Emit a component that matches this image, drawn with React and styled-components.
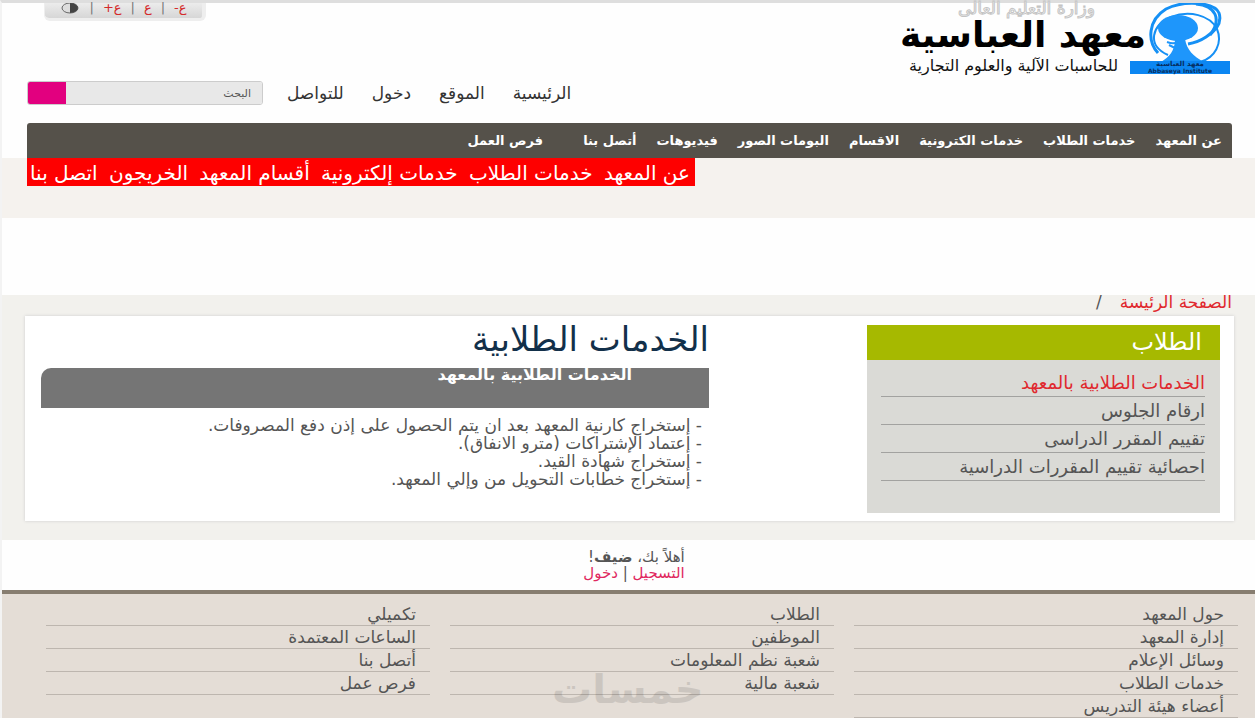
import React from 'react'
import styled, { createGlobalStyle } from 'styled-components'

const GlobalStyle = createGlobalStyle`
    * {
        box-sizing: border-box;
    }
    body {
        margin: 0;
        background: #fefefe;
        color: #555;
        font-family: "DejaVu Sans", "Noto Sans", sans-serif;
        font-size: 17px;
    }
    a {
        color: inherit;
        text-decoration: none;
        white-space: nowrap;
    }
    ul {
        margin: 0;
        padding: 0;
        list-style: none;
    }
`

const Page = styled.div`
    border-top: 3px solid #dedede;
    border-left: 2px solid #f3f3f3;
`

const Header = styled.header`
    padding: 0 23px 0 25px;
`

const TopRow = styled.div`
    display: flex;
    justify-content: space-between;
    align-items: flex-start;
    height: 78px;
`

const Brand = styled.div`
    display: flex;
    padding-right: 2px;
`

const BrandText = styled.div`
    display: flex;
    flex-direction: column;
    margin-right: -16px;
    white-space: nowrap;
`

const Ministry = styled.div`
    padding-right: 51px;
    font-size: 17px;
    line-height: 10px;
    color: #fff;
    -webkit-text-stroke: 1px #c4c4c4;
`

const Title = styled.h1`
    margin: 0;
    font-size: 36px;
    line-height: 44px;
    color: #000;
`

const Subtitle = styled.div`
    padding-right: 28px;
    font-size: 16px;
    line-height: 18px;
    color: #111;
`

const Tools = styled.div`
    display: flex;
    align-items: flex-start;
    justify-content: center;
    gap: 9px;
    width: 162px;
    height: 18px;
    margin-left: 17px;
    color: #777;
    background: linear-gradient(#ececec, #d6d6d6);
    border: solid #eee;
    border-width: 0 4px 3px 1px;
    border-radius: 0 0 6px 6px;
    font-size: 13px;
    line-height: 9px;
`

const ToolButton = styled.button`
    padding: 0;
    border: 0;
    background: none;
    font: inherit;
    line-height: 9px;
    color: #d42a2a;
`

const QuickRow = styled.div`
    display: flex;
    justify-content: flex-end;
    align-items: center;
    gap: 24px;
    height: 24px;
`

const QuickLinks = styled.nav`
    display: flex;
    gap: 28px;
    font-size: 17px;
    color: #333;
`

const Search = styled.form`
    display: flex;
    width: 236px;
    height: 24px;
    border: 1px solid #ccc;
    border-radius: 3px;
    overflow: hidden;
`

const SearchInput = styled.input`
    flex: 1;
    min-width: 0;
    padding: 0 11px;
    border: 0;
    background: #e8e8e8;
    font: inherit;
    font-size: 11px;
    &::placeholder {
        color: #555;
        opacity: 1;
    }
`

const SearchButton = styled.button`
    width: 38px;
    padding: 0;
    border: 0;
    background: #e2007f;
`

const MainNav = styled.nav`
    display: flex;
    align-items: center;
    gap: 20px;
    height: 35px;
    margin-top: 18px;
    padding-right: 10px;
    background: #55514a;
    border-radius: 3px 3px 0 0;
    font-size: 13px;
    font-weight: bold;
    color: #fff;
    a:last-child {
        margin-right: 20px;
    }
`

const SubBand = styled.div`
    display: flex;
    justify-content: flex-end;
    align-items: flex-start;
    height: 60px;
    padding-left: 25px;
    background: #f5f2ee;
`

const RedNav = styled.nav`
    display: flex;
    align-items: center;
    justify-content: space-between;
    width: 668px;
    height: 28px;
    padding: 2px 5px 0 3px;
    background: #fe0000;
    color: #fff;
    font-size: 20px;
    line-height: 24px;
`

const Content = styled.main`
    margin-top: 77px;
    padding: 0 21px 19px 23px;
    background: #f2f1ed;
`

const Crumbs = styled.nav`
    display: flex;
    gap: 18px;
    height: 21px;
    padding-right: 2px;
    line-height: 14px;
    a {
        color: #e0282e;
    }
`

const Card = styled.div`
    display: flex;
    justify-content: space-between;
    gap: 40px;
    padding: 9px 14px 8px 16px;
    background: #fff;
    box-shadow: 0 0 3px #ccc;
`

const Sidebar = styled.aside`
    width: 353px;
    height: 188px;
    background: #dadad6;
`

const SidebarTitle = styled.h2`
    margin: 0;
    padding: 0 18px;
    background: #a6b900;
    color: #fff;
    font-size: 24px;
    font-weight: normal;
    line-height: 35px;
`

const SidebarList = styled.ul`
    padding: 9px 15px 0 14px;
    font-size: 18px;
`

const SidebarItem = styled.li`
    height: 28px;
    border-bottom: 1px solid #a2a2a0;
    line-height: 28px;
    color: ${props => (props.$active ? '#e0282e' : '#555')};
`

const Article = styled.article`
    flex: 0 1 668px;
`

const ArticleTitle = styled.h2`
    margin: 0;
    color: #12304a;
    font-size: 34px;
    font-weight: normal;
    line-height: 28px;
`

const Banner = styled.h3`
    height: 40px;
    margin: 15px 0 8px;
    padding-right: 77px;
    background: #757575;
    border-top-left-radius: 10px;
    color: #fff;
    font-size: 16px;
    line-height: 14px;
`

const ServiceList = styled.ul`
    padding-right: 7px;
    font-size: 17px;
    line-height: 18px;
`

const Guest = styled.div`
    display: flex;
    justify-content: center;
    height: 50px;
    padding: 9px 0 0 11px;
    font-size: 15px;
    line-height: 16px;
    a {
        color: #e0285e;
    }
`

const Footer = styled.footer`
    position: relative;
    display: grid;
    grid-template-columns: repeat(3, 1fr);
    gap: 20px;
    height: 128px;
    padding: 9px 17px 0 44px;
    background: #e4ddd6;
    border-top: 4px solid #877d70;
    overflow: hidden;
`

const FooterItem = styled.li`
    height: 23px;
    padding-right: 14px;
    border-bottom: 1px solid #bdb6af;
    line-height: 23px;
`

const Watermark = styled.div`
    position: absolute;
    left: 550px;
    bottom: 4px;
    color: #000;
    opacity: 0.1;
    font-size: 40px;
    font-weight: bold;
    line-height: 50px;
`

const mainLinks = ['عن المعهد', 'خدمات الطلاب', 'خدمات الكترونية', 'الاقسام', 'البومات الصور', 'فيديوهات', 'أتصل بنا', 'فرص العمل']
const redLinks = ['عن المعهد', 'خدمات الطلاب', 'خدمات إلكترونية', 'أقسام المعهد', 'الخريجون', 'اتصل بنا']
const quickLinks = ['الرئيسية', 'الموقع', 'دخول', 'للتواصل']
const sideLinks = ['الخدمات الطلابية بالمعهد', 'ارقام الجلوس', 'تقييم المقرر الدراسى', 'احصائية تقييم المقررات الدراسية']
const services = [
    '- إستخراج كارنية المعهد بعد ان يتم الحصول على إذن دفع المصروفات.',
    '- إعتماد الإشتراكات (مترو الانفاق).',
    '- إستخراج شهادة القيد.',
    '- إستخراج خطابات التحويل من وإلي المعهد.',
]
const footerColumns = [
    ['حول المعهد', 'إدارة المعهد', 'وسائل الإعلام', 'خدمات الطلاب', 'أعضاء هيئة التدريس'],
    ['الطلاب', 'الموظفين', 'شعبة نظم المعلومات', 'شعبة مالية'],
    ['تكميلي', 'الساعات المعتمدة', 'أتصل بنا', 'فرص عمل'],
]

const links = items => items.map(item => <a href="#" key={item}>{item}</a>)

const Logo = () => (
    <svg width="100" height="74" viewBox="0 0 100 74">
        <g fill="none" stroke="#1590f5">
            <path d="M28 50C17 38 18 17 36 6C54 -3 84 -1 89 10C92 19 87 27 76 34C70 38 64 40 58 41" strokeWidth="3" />
            <path d="M38 52C16 42 22 22 41 14C59 7 80 12 87 26C93 40 85 55 70 59" strokeWidth="2" />
            <path d="M66 1C86 3 92 16 80 32" strokeWidth="3" />
        </g>
        <ellipse cx="48" cy="25" rx="20" ry="13" fill="#1e96fb" />
        <path d="M45 36H55C57 47 63 53 74 59H31C39 54 45 48 45 36Z" fill="#1e96fb" />
        <path d="M37 39Q45 42 48 38M39 42L45 45" stroke="#1e96fb" strokeWidth="2" fill="none" />
        <rect y="58" width="100" height="13" fill="#0c86f2" />
        <text x="50" y="63" fontSize="7" fontWeight="bold" textAnchor="middle" fill="#072e60">معهد العباسية</text>
        <text x="50" y="70" fontSize="6" fontWeight="bold" textAnchor="middle" fill="#072e60">Abbaseya Institute</text>
    </svg>
)

const ContrastIcon = () => (
    <svg width="20" height="12" viewBox="0 0 20 12">
        <ellipse cx="10" cy="5" rx="8" ry="5" fill="#ddd" stroke="#666" strokeWidth="1" />
        <path d="M10 0A8 5 0 0 1 10 10Z" fill="#444" />
    </svg>
)

const App = () => {
    return (
        <Page dir="rtl" lang="ar">
            <GlobalStyle />
            <Header>
                <TopRow>
                    <Brand>
                        <Logo />
                        <BrandText>
                            <Ministry>وزارة التعليم العالى</Ministry>
                            <Title>معهد العباسية</Title>
                            <Subtitle>للحاسبات الآلية والعلوم التجارية</Subtitle>
                        </BrandText>
                    </Brand>
                    <Tools>
                        <ToolButton type="button">ع-</ToolButton>
                        <span>|</span>
                        <ToolButton type="button">ع</ToolButton>
                        <span>|</span>
                        <ToolButton type="button">ع+</ToolButton>
                        <span>|</span>
                        <ToolButton type="button" aria-label="التباين"><ContrastIcon /></ToolButton>
                    </Tools>
                </TopRow>
                <QuickRow>
                    <QuickLinks>{links(quickLinks)}</QuickLinks>
                    <Search>
                        <SearchInput type="text" placeholder="البحث" aria-label="البحث" />
                        <SearchButton type="button" aria-label="البحث" />
                    </Search>
                </QuickRow>
                <MainNav>{links(mainLinks)}</MainNav>
            </Header>
            <SubBand>
                <RedNav>{links(redLinks)}</RedNav>
            </SubBand>
            <Content>
                <Crumbs>
                    <a href="#">الصفحة الرئيسة</a>
                    <span>/</span>
                </Crumbs>
                <Card>
                    <Sidebar>
                        <SidebarTitle>الطلاب</SidebarTitle>
                        <SidebarList>
                            {sideLinks.map((item, i) => (
                                <SidebarItem key={item} $active={i === 0}><a href="#">{item}</a></SidebarItem>
                            ))}
                        </SidebarList>
                    </Sidebar>
                    <Article>
                        <ArticleTitle>الخدمات الطلابية</ArticleTitle>
                        <Banner>الخدمات الطلابية بالمعهد</Banner>
                        <ServiceList>
                            {services.map(item => <li key={item}>{item}</li>)}
                        </ServiceList>
                    </Article>
                </Card>
            </Content>
            <Guest>
                <div>
                    <div>أهلاً بك، <b>ضيف</b>!</div>
                    <div><a href="#">التسجيل</a> | <a href="#">دخول</a></div>
                </div>
            </Guest>
            <Footer>
                {footerColumns.map(column => (
                    <ul key={column[0]}>
                        {column.map(item => <FooterItem key={item}><a href="#">{item}</a></FooterItem>)}
                    </ul>
                ))}
                <Watermark>خمسات</Watermark>
            </Footer>
        </Page>
    )
}

export default App
